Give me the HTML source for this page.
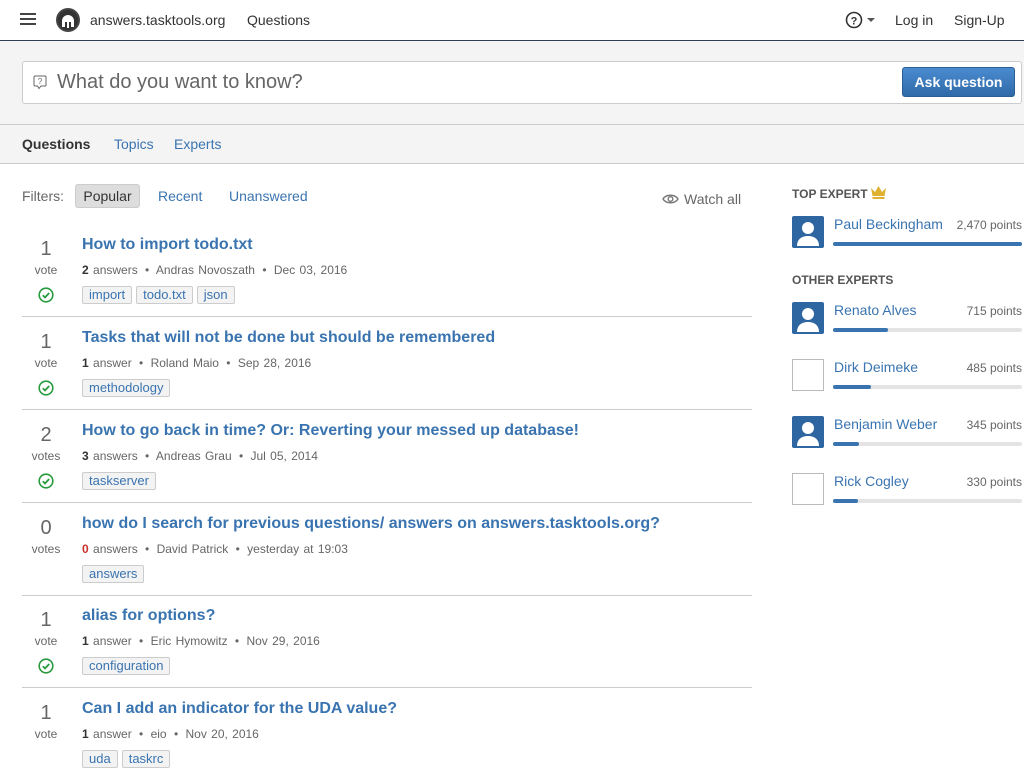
<!DOCTYPE html>
<html><head><meta charset="utf-8"><style>
*{box-sizing:border-box;margin:0;padding:0}
body{width:1024px;height:768px;overflow:hidden;font-family:"Liberation Sans",sans-serif;background:#fff;color:#333;position:relative}
a{color:#3a74b0;text-decoration:none}
.top{position:absolute;left:0;top:0;width:1024px;height:41px;border-bottom:1px solid #2d3e50;background:#fff}
.abs{position:absolute}
.gray{position:absolute;top:41px;left:0;width:1024px;height:123px;background:#f4f4f4;border-bottom:1px solid #ccc}
.search{position:absolute;left:22px;top:61px;width:1000px;height:43px;background:#fff;border:1px solid #ccc;border-radius:3px}
.btn{position:absolute;left:902px;top:67px;width:113px;height:30px;background:linear-gradient(#4a8bd0,#2f6aa8);border:1px solid #2a5f96;border-radius:3px;color:#fff;font-weight:bold;font-size:14px;text-align:center;line-height:28px}
.tabline{position:absolute;left:0;top:124px;width:1024px;border-top:1px solid #ccc}
.tab{position:absolute;top:136px;font-size:14px}
.q{position:absolute;left:22px;width:730px;height:93px;border-bottom:1px solid #ccc}
.q .n{position:absolute;left:0;width:48px;text-align:center;top:14px;font-size:20px;color:#666}
.q .v{position:absolute;left:0;width:48px;text-align:center;top:39px;font-size:12px;color:#666}
.q .ck{position:absolute;left:16px;top:63px}
.q .t{position:absolute;left:60px;top:12px;font-size:16px;font-weight:bold;color:#3a74b0}
.q .m{position:absolute;left:60px;top:39px;font-size:12px;color:#666;word-spacing:1px}
.q .m i{font-style:normal;padding:0 3px}
.q .m b{color:#333}
.q .tg{position:absolute;left:60px;top:62px;font-size:13px}
.tg span{display:inline-block;border:1px solid #ccc;background:#f3f3f3;border-radius:2px;color:#3a74b0;padding:0 6px;height:18px;line-height:16px;margin-right:4px}
.ex{position:absolute;left:792px;width:230px;height:50px}
.av{position:absolute;left:0;top:0;width:32px;height:32px;background:#2e66a1;border-radius:2px;overflow:hidden}
.avb{position:absolute;left:0;top:0;width:32px;height:32px;border:1px solid #bbb;background:#fff}
.ex .nm{position:absolute;left:42px;top:0;font-size:14px;color:#3a74b0}
.ex .pt{position:absolute;right:0;top:2px;font-size:12px;color:#666}
.bar{position:absolute;left:41px;top:26px;width:189px;height:4px;background:#e4e4e4;border-radius:2px}
.bar i{display:block;height:4px;background:#3a74b0;border-radius:2px}
.h{position:absolute;left:792px;font-size:12px;font-weight:bold;color:#555}
</style></head><body>
<div class="top">
 <div class="abs" style="left:20px;top:13px;width:16px;height:2px;background:#444;box-shadow:0 5px 0 #444,0 10px 0 #444"></div>
 <svg class="abs" style="left:56px;top:8px" width="24" height="24" viewBox="0 0 24 24"><circle cx="12" cy="12" r="12" fill="#444"/><circle cx="12" cy="12" r="10" fill="#333"/><path d="M6 13a6 6 0 0 1 12 0v6h-3v-5h-2v6h-2v-6H9v5H6z" fill="#fff"/></svg>
 <div class="abs" style="left:90px;top:12px;font-size:14px;color:#333">answers.tasktools.org</div>
 <div class="abs" style="left:247px;top:12px;font-size:14px;color:#333">Questions</div>
 <svg class="abs" style="left:845px;top:11px" width="18" height="18" viewBox="0 0 18 18"><circle cx="9" cy="9" r="7.5" fill="none" stroke="#333" stroke-width="1.6"/><text x="9" y="13.5" font-size="11" font-weight="bold" text-anchor="middle" fill="#333" font-family="Liberation Sans">?</text></svg>
 <div class="abs" style="left:867px;top:18px;border:4px solid transparent;border-top:4px solid #555"></div>
 <div class="abs" style="left:895px;top:12px;font-size:14px;color:#333">Log in</div>
 <div class="abs" style="left:954px;top:12px;font-size:14px;color:#333">Sign-Up</div>
</div>
<div class="gray"></div>
<div class="search">
 <svg class="abs" style="left:10px;top:13px" width="14" height="15" viewBox="0 0 14 15"><path d="M2 1h10a1 1 0 0 1 1 1v8a1 1 0 0 1-1 1H8l-2 2.5L4.5 11H2a1 1 0 0 1-1-1V2a1 1 0 0 1 1-1z" fill="none" stroke="#666"/><text x="7" y="9" font-size="8" text-anchor="middle" fill="#666" font-family="Liberation Sans">?</text></svg>
 <div class="abs" style="left:34px;top:9px;font-size:20px;color:#666">What do you want to know?</div>
</div>
<div class="btn">Ask question</div>
<div class="tabline"></div>
<div class="tab" style="left:22px;font-weight:bold;color:#333">Questions</div>
<div class="tab" style="left:114px"><a>Topics</a></div>
<div class="tab" style="left:174px"><a>Experts</a></div>

<div class="abs" style="left:22px;top:188px;font-size:14px;color:#666">Filters:</div>
<div class="abs" style="left:75px;top:184px;width:65px;height:24px;background:#ddd;border:1px solid #ccc;border-radius:3px;font-size:14px;line-height:22px;text-align:center;color:#333">Popular</div>
<div class="abs" style="left:158px;top:188px;font-size:14px"><a>Recent</a></div>
<div class="abs" style="left:229px;top:188px;font-size:14px"><a>Unanswered</a></div>
<svg class="abs" style="left:662px;top:193px" width="17" height="12" viewBox="0 0 17 12"><path d="M1 6C4 1 13 1 16 6C13 11 4 11 1 6z" fill="none" stroke="#777" stroke-width="1.4"/><circle cx="8.5" cy="6" r="2.3" fill="none" stroke="#777" stroke-width="1.4"/></svg>
<div class="abs" style="left:684px;top:191px;font-size:14px;color:#666">Watch all</div>

<div class="q" style="top:224px"><div class="n">1</div><div class="v">vote</div><svg class="ck" width="16" height="16" viewBox="0 0 16 16"><circle cx="8" cy="8" r="6.8" fill="none" stroke="#2a9a3e" stroke-width="1.6"/><path d="M4.8 8.2l2.2 2.2 4.2-4.4" fill="none" stroke="#2a9a3e" stroke-width="1.8"/></svg>
<div class="t">How to import todo.txt</div><div class="m"><b>2</b> answers <i>•</i> Andras Novoszath <i>•</i> Dec 03, 2016</div><div class="tg"><span>import</span><span>todo.txt</span><span>json</span></div></div>
<div class="q" style="top:317px"><div class="n">1</div><div class="v">vote</div><svg class="ck" width="16" height="16" viewBox="0 0 16 16"><circle cx="8" cy="8" r="6.8" fill="none" stroke="#2a9a3e" stroke-width="1.6"/><path d="M4.8 8.2l2.2 2.2 4.2-4.4" fill="none" stroke="#2a9a3e" stroke-width="1.8"/></svg>
<div class="t">Tasks that will not be done but should be remembered</div><div class="m"><b>1</b> answer <i>•</i> Roland Maio <i>•</i> Sep 28, 2016</div><div class="tg"><span>methodology</span></div></div>
<div class="q" style="top:410px"><div class="n">2</div><div class="v">votes</div><svg class="ck" width="16" height="16" viewBox="0 0 16 16"><circle cx="8" cy="8" r="6.8" fill="none" stroke="#2a9a3e" stroke-width="1.6"/><path d="M4.8 8.2l2.2 2.2 4.2-4.4" fill="none" stroke="#2a9a3e" stroke-width="1.8"/></svg>
<div class="t">How to go back in time? Or: Reverting your messed up database!</div><div class="m"><b>3</b> answers <i>•</i> Andreas Grau <i>•</i> Jul 05, 2014</div><div class="tg"><span>taskserver</span></div></div>
<div class="q" style="top:503px"><div class="n">0</div><div class="v">votes</div>
<div class="t">how do I search for previous questions/ answers on answers.tasktools.org?</div><div class="m"><b style="color:#c9302c">0</b> answers <i>•</i> David Patrick <i>•</i> yesterday at 19:03</div><div class="tg"><span>answers</span></div></div>
<div class="q" style="top:595px"><div class="n">1</div><div class="v">vote</div><svg class="ck" width="16" height="16" viewBox="0 0 16 16"><circle cx="8" cy="8" r="6.8" fill="none" stroke="#2a9a3e" stroke-width="1.6"/><path d="M4.8 8.2l2.2 2.2 4.2-4.4" fill="none" stroke="#2a9a3e" stroke-width="1.8"/></svg>
<div class="t">alias for options?</div><div class="m"><b>1</b> answer <i>•</i> Eric Hymowitz <i>•</i> Nov 29, 2016</div><div class="tg"><span>configuration</span></div></div>
<div class="q" style="top:688px;border-bottom:none"><div class="n">1</div><div class="v">vote</div>
<div class="t">Can I add an indicator for the UDA value?</div><div class="m"><b>1</b> answer <i>•</i> eio <i>•</i> Nov 20, 2016</div><div class="tg"><span>uda</span><span>taskrc</span></div></div>

<div class="h" style="top:187px">TOP EXPERT</div>
<svg class="abs" style="left:870px;top:185px" width="17" height="14" viewBox="0 0 17 14"><path d="M1 3l4 4 3.5-6 3.5 6 4-4-1.5 8h-12z" fill="#e0b030"/><rect x="2.5" y="12" width="12" height="2" fill="#e0b030"/></svg>
<div class="ex" style="top:216px"><div class="av"><svg width="32" height="32"><circle cx="16" cy="12" r="6" fill="#fff"/><path d="M5 30c0-7 5-10 11-10s11 3 11 10z" fill="#fff"/></svg></div><div class="nm">Paul Beckingham</div><div class="pt">2,470 points</div><div class="bar"><i style="width:100%"></i></div></div>
<div class="h" style="top:273px">OTHER EXPERTS</div>
<div class="ex" style="top:302px"><div class="av"><svg width="32" height="32"><circle cx="16" cy="12" r="6" fill="#fff"/><path d="M5 30c0-7 5-10 11-10s11 3 11 10z" fill="#fff"/></svg></div><div class="nm">Renato Alves</div><div class="pt">715 points</div><div class="bar"><i style="width:29%"></i></div></div>
<div class="ex" style="top:359px"><div class="avb"></div><div class="nm">Dirk Deimeke</div><div class="pt">485 points</div><div class="bar"><i style="width:20%"></i></div></div>
<div class="ex" style="top:416px"><div class="av"><svg width="32" height="32"><circle cx="16" cy="12" r="6" fill="#fff"/><path d="M5 30c0-7 5-10 11-10s11 3 11 10z" fill="#fff"/></svg></div><div class="nm">Benjamin Weber</div><div class="pt">345 points</div><div class="bar"><i style="width:14%"></i></div></div>
<div class="ex" style="top:473px"><div class="avb"></div><div class="nm">Rick Cogley</div><div class="pt">330 points</div><div class="bar"><i style="width:13%"></i></div></div>
</body></html>
